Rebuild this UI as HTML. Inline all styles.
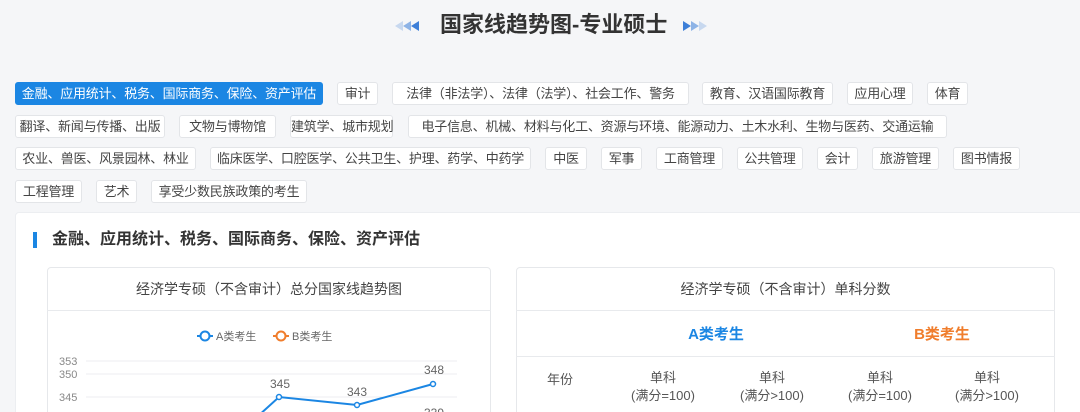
<!DOCTYPE html>
<html style="width:1080px;height:412px;overflow:hidden"><head><meta charset="utf-8"><style>
*{margin:0;padding:0;box-sizing:border-box}
body{width:1080px;height:412px;overflow:hidden;background:#f5f6f8;font-family:"Liberation Sans","Noto Sans CJK SC",sans-serif;position:relative;color:#333}
.t{position:absolute;height:23px;line-height:21px;border:1px solid #e3e5e8;background:#fff;border-radius:3px;font-size:13px;color:#444;text-align:center;white-space:nowrap;letter-spacing:-0.2px}
.t.on{background:#1b86e3;border-color:#1b86e3;color:#fff}
.abs{position:absolute}
</style></head><body>
<div class="abs" style="left:440px;top:10px;width:222px;text-align:center;font-size:22px;font-weight:bold;color:#333;line-height:30px;white-space:nowrap">国家线趋势图-专业硕士</div>
<svg class="abs" style="left:395px;top:20px" width="28" height="12"><polygon points="0,6 8,1 8,11" fill="#c7d8ef"/><polygon points="8,6 16,1 16,11" fill="#8db3e6"/><polygon points="16,6 24,1 24,11" fill="#3d7fd8"/></svg>
<svg class="abs" style="left:679px;top:20px" width="28" height="12"><polygon points="4,1 12,6 4,11" fill="#3d7fd8"/><polygon points="12,1 20,6 12,11" fill="#8db3e6"/><polygon points="20,1 28,6 20,11" fill="#c7d8ef"/></svg>

<div class="t on" style="left:15px;top:82px;width:308px">金融、应用统计、税务、国际商务、保险、资产评估</div>
<div class="t" style="left:337px;top:82px;width:41px">审计</div>
<div class="t" style="left:392px;top:82px;width:297px">法律（非法学）、法律（法学）、社会工作、警务</div>
<div class="t" style="left:702px;top:82px;width:131px">教育、汉语国际教育</div>
<div class="t" style="left:847px;top:82px;width:66px">应用心理</div>
<div class="t" style="left:927px;top:82px;width:41px">体育</div>

<div class="t" style="left:15px;top:115px;width:150px">翻译、新闻与传播、出版</div>
<div class="t" style="left:179px;top:115px;width:97px">文物与博物馆</div>
<div class="t" style="left:290px;top:115px;width:103px">建筑学、城市规划</div>
<div class="t" style="left:408px;top:115px;width:539px">电子信息、机械、材料与化工、资源与环境、能源动力、土木水利、生物与医药、交通运输</div>

<div class="t" style="left:15px;top:147px;width:181px">农业、兽医、风景园林、林业</div>
<div class="t" style="left:210px;top:147px;width:321px">临床医学、口腔医学、公共卫生、护理、药学、中药学</div>
<div class="t" style="left:545px;top:147px;width:42px">中医</div>
<div class="t" style="left:601px;top:147px;width:41px">军事</div>
<div class="t" style="left:656px;top:147px;width:67px">工商管理</div>
<div class="t" style="left:737px;top:147px;width:66px">公共管理</div>
<div class="t" style="left:817px;top:147px;width:41px">会计</div>
<div class="t" style="left:872px;top:147px;width:67px">旅游管理</div>
<div class="t" style="left:953px;top:147px;width:67px">图书情报</div>

<div class="t" style="left:15px;top:180px;width:67px">工程管理</div>
<div class="t" style="left:96px;top:180px;width:41px">艺术</div>
<div class="t" style="left:151px;top:180px;width:156px">享受少数民族政策的考生</div>

<div class="abs" style="left:15px;top:212px;width:1075px;height:210px;background:#fff;border:1px solid #eceef1;border-radius:4px"></div>
<div class="abs" style="left:33px;top:232px;width:4px;height:16px;background:#1b86e3"></div>
<div class="abs" style="left:52px;top:229px;font-size:16px;font-weight:bold;color:#333;line-height:22px">金融、应用统计、税务、国际商务、保险、资产评估</div>

<div class="abs" style="left:47px;top:267px;width:444px;height:160px;border:1px solid #e6e8eb;border-radius:4px;background:#fff"></div>
<div class="abs" style="left:47px;top:268px;width:444px;height:43px;border-bottom:1px solid #e8eaed;text-align:center;line-height:43px;font-size:14px;color:#444">经济学专硕（不含审计）总分国家线趋势图</div>
<svg class="abs" style="left:47px;top:311px" width="444" height="101" font-family="Liberation Sans,Noto Sans CJK SC,sans-serif">
<line x1="150" y1="25" x2="166" y2="25" stroke="#1b86e3" stroke-width="2"/><circle cx="158" cy="25" r="4.5" fill="#fff" stroke="#1b86e3" stroke-width="2"/>
<text x="169" y="29" font-size="11" fill="#666">A类考生</text>
<line x1="226" y1="25" x2="242" y2="25" stroke="#f07d2c" stroke-width="2"/><circle cx="234" cy="25" r="4.5" fill="#fff" stroke="#f07d2c" stroke-width="2"/>
<text x="245" y="29" font-size="11" fill="#666">B类考生</text>
<g stroke="#eceef0"><line x1="39" y1="50" x2="410" y2="50"/><line x1="39" y1="63" x2="410" y2="63"/><line x1="39" y1="86" x2="410" y2="86"/></g>
<g font-size="11" fill="#888"><text x="12" y="54">353</text><text x="12" y="67">350</text><text x="12" y="90">345</text></g>
<polyline points="210,106 232,86 310,94 386,73" fill="none" stroke="#1b86e3" stroke-width="2"/>
<g fill="#fff" stroke="#1b86e3" stroke-width="1.5"><circle cx="232" cy="86" r="2.5"/><circle cx="310" cy="94" r="2.5"/><circle cx="386" cy="73" r="2.5"/></g>
<g font-size="12" fill="#666" text-anchor="middle"><text x="233" y="77">345</text><text x="310" y="85">343</text><text x="387" y="63">348</text><text x="387" y="106">339</text></g>
</svg>

<div class="abs" style="left:516px;top:267px;width:539px;height:160px;border:1px solid #e6e8eb;border-radius:4px;background:#fff"></div>
<div class="abs" style="left:516px;top:268px;width:539px;height:43px;border-bottom:1px solid #e8eaed;text-align:center;line-height:43px;font-size:14px;color:#444">经济学专硕（不含审计）单科分数</div>
<div class="abs" style="left:516px;top:311px;width:539px;height:46px;border-bottom:1px solid #e8eaed"></div>
<div class="abs" style="left:666px;top:323px;width:100px;text-align:center;font-size:15px;font-weight:bold;color:#1b86e3">A类考生</div>
<div class="abs" style="left:892px;top:323px;width:100px;text-align:center;font-size:15px;font-weight:bold;color:#f07d2c">B类考生</div>
<div class="abs" style="left:530px;top:369px;width:60px;text-align:center;font-size:13px;color:#555">年份</div>
<div class="abs" style="left:613px;top:369px;width:100px;text-align:center;font-size:13px;color:#555;line-height:18px">单科<br>(满分=100)</div>
<div class="abs" style="left:722px;top:369px;width:100px;text-align:center;font-size:13px;color:#555;line-height:18px">单科<br>(满分&gt;100)</div>
<div class="abs" style="left:830px;top:369px;width:100px;text-align:center;font-size:13px;color:#555;line-height:18px">单科<br>(满分=100)</div>
<div class="abs" style="left:937px;top:369px;width:100px;text-align:center;font-size:13px;color:#555;line-height:18px">单科<br>(满分&gt;100)</div>
</body></html>
